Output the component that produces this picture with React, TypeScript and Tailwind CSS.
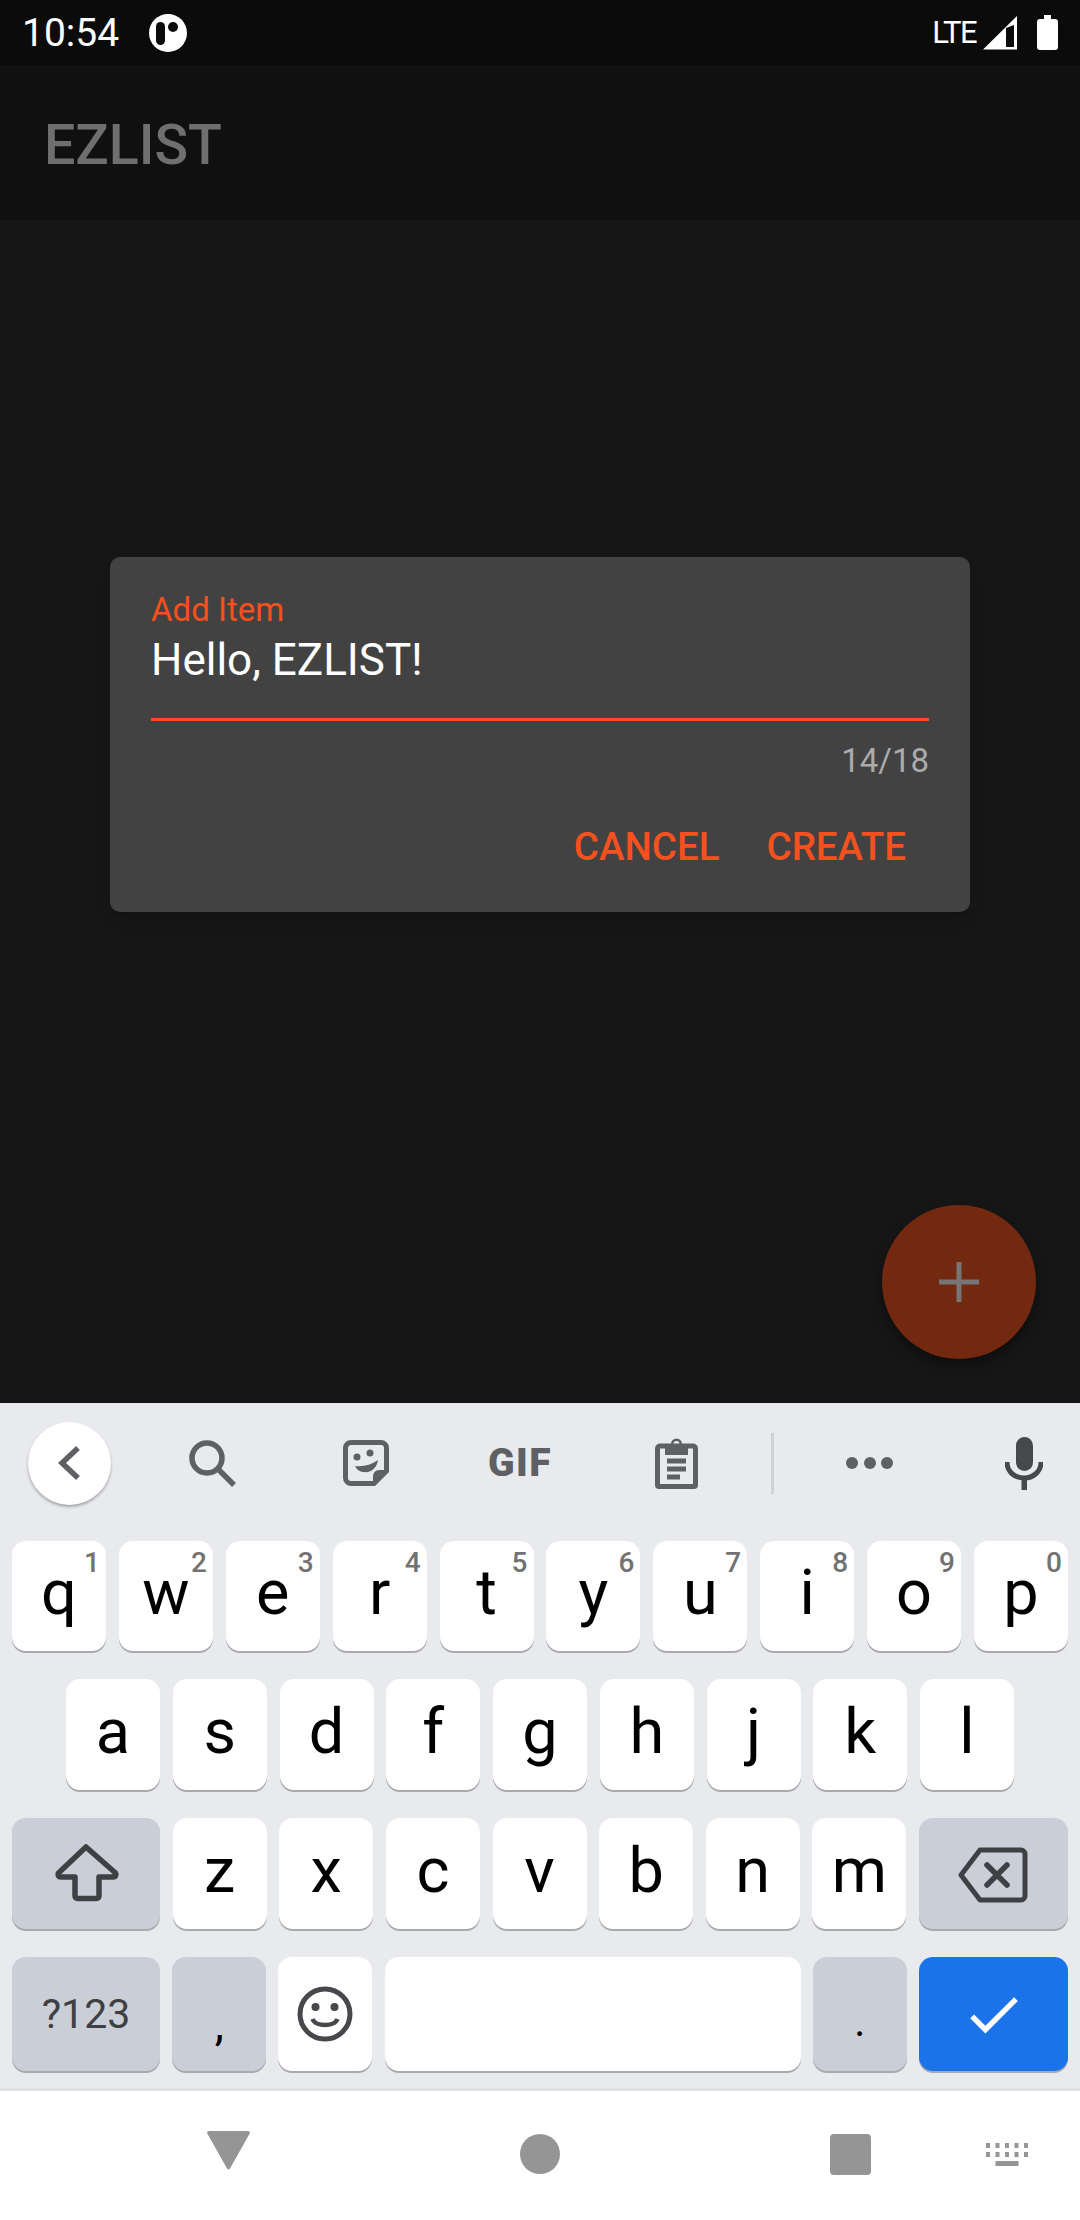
import React from 'react';

const ROW1 = [
  ['q', '1'], ['w', '2'], ['e', '3'], ['r', '4'], ['t', '5'],
  ['y', '6'], ['u', '7'], ['i', '8'], ['o', '9'], ['p', '0'],
];
const ROW2 = ['a', 's', 'd', 'f', 'g', 'h', 'j', 'k', 'l'];
const ROW3 = ['z', 'x', 'c', 'v', 'b', 'n', 'm'];

function Key({ label, hint, className = 'w-[94px]' }: { label: string; hint?: string; className?: string }) {
  return (
    <div className={`relative h-full ${className} flex items-center justify-center rounded-[14px] bg-white pb-[7px] text-[63px] leading-none text-black shadow-[0_2px_0_#a9aaae]`}>
      {label}
      {hint && <span className="absolute right-[6px] top-[8px] text-[28px] font-medium leading-[28px] text-[#727272]">{hint}</span>}
    </div>
  );
}

function StatusBar() {
  return (
    <div className="flex h-[65px] items-center bg-[#0b0b0b] pl-[22px] pr-[22px] text-white">
      <span className="pt-[2px] text-[39px] leading-none">10:54</span>
      <svg className="ml-[30px]" width="38" height="38" viewBox="0 0 38 38">
        <circle cx="19" cy="19" r="19" fill="#fff" />
        <rect x="7" y="8" width="9" height="23" rx="4.500" fill="#0b0b0b" />
        <circle cx="24" cy="13" r="5" fill="#0b0b0b" />
      </svg>
      <span className="ml-auto text-[31px] leading-none tracking-[-1.6px]">LTE</span>
      <svg className="ml-[7px]" width="34" height="34" viewBox="0 0 34 34">
        <path fillRule="evenodd" fill="#fff" d="M0 33.5 34 0v33.5H0zM23 12v19h8V9l-8 3z" />
      </svg>
      <svg className="ml-[20px]" width="21" height="35" viewBox="0 0 21 35">
        <path fill="#fff" d="M7 0h7v4h4a3 3 0 0 1 3 3v25a3 3 0 0 1-3 3H3a3 3 0 0 1-3-3V7a3 3 0 0 1 3-3h4V0z" />
      </svg>
    </div>
  );
}

function Dialog() {
  return (
    <div className="ml-[110px] mt-[337px] h-[355px] w-[860px] rounded-[10px] bg-[#424242] px-[41px] pt-[33px] shadow-lg">
      <div className="text-[33px] leading-[40px] text-[#f4511e]">Add Item</div>
      <div className="mt-[5px] text-[44px] leading-[50px] text-white">Hello, EZLIST!</div>
      <div className="mt-[33px] h-[3px] bg-[#f4511e]" />
      <div className="mt-[20px] text-right text-[33px] leading-[40px] text-[#ababab]">14/18</div>
      <div className="mt-[44px] flex justify-end gap-[47px] pr-[23px] text-[38.5px] font-medium leading-[44px] text-[#f4511e]">
        <span>CANCEL</span>
        <span>CREATE</span>
      </div>
    </div>
  );
}

function Toolbar() {
  return (
    <div className="flex h-[120px] items-center pl-[28px] text-[#5f6064]">
      <div className="flex h-[83px] w-[83px] items-center justify-center rounded-full bg-white shadow-[0_2px_3px_rgba(0,0,0,0.3)]">
        <svg width="24" height="36" viewBox="0 0 24 36">
          <path d="M20 3 4 18l16 15" fill="none" stroke="#5f6064" strokeWidth="5.5" />
        </svg>
      </div>
      <svg className="ml-[78px]" width="47" height="47" viewBox="0 0 47 47">
        <circle cx="18" cy="18" r="15" fill="none" stroke="currentColor" strokeWidth="5.5" />
        <path d="m29 29 16 16" stroke="currentColor" strokeWidth="5.5" />
      </svg>
      <svg className="ml-[107px]" width="46" height="46" viewBox="0 0 46 46">
        <path d="M8 2.5h30a5.5 5.5 0 0 1 5.5 5.5v23L31 43.500H8A5.500 5.500 0 0 1 2.500 38V8A5.500 5.500 0 0 1 8 2.500z" fill="none" stroke="currentColor" strokeWidth="5" />
        <path d="M45 30 30 45v-9a6 6 0 0 1 6-6h9z" fill="currentColor" />
        <circle cx="14" cy="17" r="3.500" fill="currentColor" />
        <circle cx="27" cy="13" r="3.500" fill="currentColor" />
        <path d="M12 26c8 1 16-1 23-6-1 8-7 13-14 12-4 0-7-2-9-6z" fill="currentColor" />
      </svg>
      <span className="ml-[97px] w-[68px] text-center text-[39px] font-black leading-none tracking-[1.5px]">GIF</span>
      <svg className="ml-[101px]" width="43" height="52" viewBox="0 0 43 52">
        <path d="M5 9h33a2.500 2.500 0 0 1 2.500 2.500v36.500a1.500 1.500 0 0 1-1.500 1.500H4a1.500 1.500 0 0 1-1.500-1.500V11.500A2.500 2.500 0 0 1 5 9z" fill="none" stroke="currentColor" strokeWidth="5" />
        <path fillRule="evenodd" d="M10 7h6a5.500 5.500 0 0 1 11 0h6v11H10V7zm11.500-3a3 3 0 1 0 0 6 3 3 0 0 0 0-6z" fill="currentColor" />
        <rect x="12" y="21.500" width="19" height="5" fill="currentColor" />
        <rect x="12" y="29.500" width="19" height="5" fill="currentColor" />
        <rect x="12" y="37.500" width="13" height="5" fill="currentColor" />
      </svg>
      <div className="ml-[73px] h-[61px] w-[3px] bg-[#d0d1d5]" />
      <div className="ml-[72px] flex w-[47px] justify-between">
        <div className="h-[12px] w-[12px] rounded-full bg-current" />
        <div className="h-[12px] w-[12px] rounded-full bg-current" />
        <div className="h-[12px] w-[12px] rounded-full bg-current" />
      </div>
      <svg className="ml-[112px]" width="38" height="53" viewBox="0 0 38 53">
        <rect x="11" y="0" width="17" height="34" rx="8.500" fill="#47484b" />
        <path d="M2 25c0 10 8 16 17 16s17-6 17-16" fill="none" stroke="#47484b" strokeWidth="5" />
        <rect x="16.500" y="40" width="5.500" height="13" fill="#47484b" />
      </svg>
    </div>
  );
}

function Keyboard() {
  return (
    <div className="h-[685px] bg-[#e8eaed]">
      <Toolbar />
      <div className="mt-[18px] flex h-[110px] justify-between px-[12px]">
        {ROW1.map(([k, n]) => <Key key={k} label={k} hint={n} />)}
      </div>
      <div className="mt-[28px] flex h-[111px] justify-between px-[66px]">
        {ROW2.map((k) => <Key key={k} label={k} />)}
      </div>
      <div className="mt-[28px] flex h-[111px] justify-between px-[12px]">
        <div className="flex w-[148px] items-center justify-center rounded-[14px] bg-[#caced6] shadow-[0_2px_0_#a9aaae]">
          <svg width="70" height="65" viewBox="0 0 70 65" className="-mt-[4px]">
            <path d="M35 8 8 33.500c-1.500 1.500-1 4.500 2 4.500h14v19c0 1.500 1 2.500 2.500 2.500h19c1.500 0 2.500-1 2.500-2.500V38h14c3 0 3.500-3 2-4.500L35 8z" fill="none" stroke="#3f4043" strokeWidth="5.500" strokeLinejoin="round" />
          </svg>
        </div>
        {ROW3.map((k) => <Key key={k} label={k} />)}
        <div className="flex w-[149px] items-center justify-center rounded-[14px] bg-[#caced6] shadow-[0_2px_0_#a9aaae]">
          <svg width="70" height="56" viewBox="0 0 70 56" className="mt-[3px] ml-[-2px]">
            <path d="M22 3h41a4 4 0 0 1 4 4v42a4 4 0 0 1-4 4H22L3 28 22 3z" fill="none" stroke="#3f4043" strokeWidth="5" strokeLinejoin="round" />
            <path d="m29 18 20 20m0-20L29 38" stroke="#3f4043" strokeWidth="5.500" strokeLinecap="round" />
          </svg>
        </div>
      </div>
      <div className="mt-[28px] flex h-[114px] justify-between px-[12px]">
        <div className="flex w-[148px] items-center justify-center rounded-[14px] bg-[#caced6] text-[41px] leading-none text-[#3f4043] shadow-[0_2px_0_#a9aaae]">?123</div>
        <div className="flex w-[94px] items-end justify-center rounded-[14px] bg-[#caced6] pb-[24px] text-[46px] leading-none text-black shadow-[0_2px_0_#a9aaae]">,</div>
        <div className="flex w-[94px] items-center justify-center rounded-[14px] bg-white shadow-[0_2px_0_#a9aaae]">
          <svg width="56" height="56" viewBox="0 0 56 56">
            <circle cx="28" cy="28" r="25" fill="none" stroke="#47484b" strokeWidth="5" />
            <circle cx="18.500" cy="21" r="4" fill="#47484b" />
            <circle cx="37.500" cy="21" r="4" fill="#47484b" />
            <path d="M15.500 33c3 8 22 8 25 0" fill="none" stroke="#47484b" strokeWidth="4.500" />
          </svg>
        </div>
        <div className="w-[416px] rounded-[14px] bg-white shadow-[0_2px_0_#a9aaae]" />
        <div className="flex w-[94px] items-end justify-center rounded-[14px] bg-[#caced6] pb-[28px] text-[42px] leading-none text-black shadow-[0_2px_0_#a9aaae]">.</div>
        <div className="flex w-[149px] items-center justify-center rounded-[14px] bg-[#1a73e8] shadow-[0_2px_0_#a9aaae]">
          <svg width="65" height="65" viewBox="0 0 24 24">
            <path fill="#fff" d="M9 16.170 4.830 12l-1.420 1.410L9 19 21 7l-1.410-1.410z" />
          </svg>
        </div>
      </div>
    </div>
  );
}

function NavBar() {
  return (
    <div className="flex h-[132px] items-start border-t-[3px] border-[#dfe0e2] bg-white pl-[207px] pt-[40px]">
      <svg width="43" height="39" viewBox="0 0 43 39">
        <path d="M2 0h39c1.500 0 2.300 1.200 1.700 2.600L23 37.500c-.8 1.400-2.200 1.400-3 0L.3 2.600C-.3 1.200.5 0 2 0z" fill="#959595" />
      </svg>
      <div className="ml-[270px] mt-[3px] h-[40px] w-[40px] rounded-full bg-[#959595]" />
      <div className="ml-[270px] mt-[3px] h-[41px] w-[41px] rounded-[4px] bg-[#959595]" />
      <svg className="ml-[115px] mt-[12px]" width="42" height="23" viewBox="0 0 42 23">
        <path d="M0 0h4v5H0zM9.500 0h4v5h-4zM19 0h4v5h-4zM28.500 0h4v5h-4zM38 0h4v5h-4zM0 9h4v5H0zM9.500 9h4v5h-4zM19 9h4v5h-4zM28.500 9h4v5h-4zM38 9h4v5h-4zM9.500 18h23v5h-23z" fill="#959595" />
      </svg>
    </div>
  );
}

export default function App() {
  return (
    <div className="flex h-[2220px] w-[1080px] flex-col overflow-hidden bg-[#161616] [font-family:Roboto,sans-serif]">
      <StatusBar />
      <div className="flex h-[155px] items-center bg-[#101010] pl-[44px] pt-[6px] text-[55.5px] font-medium leading-none text-[#6f6f6f]">EZLIST</div>
      <div className="relative flex-1">
        <Dialog />
        <div className="absolute bottom-[44px] right-[44px] flex h-[154px] w-[154px] items-center justify-center rounded-full bg-[#73290f] shadow-[0_6px_12px_rgba(0,0,0,0.4)]">
          <svg width="40" height="40" viewBox="0 0 40 40">
            <path d="M17.500 0h5v17.500H40v5H22.500V40h-5V22.500H0v-5h17.500z" fill="#757575" />
          </svg>
        </div>
      </div>
      <Keyboard />
      <NavBar />
    </div>
  );
}
